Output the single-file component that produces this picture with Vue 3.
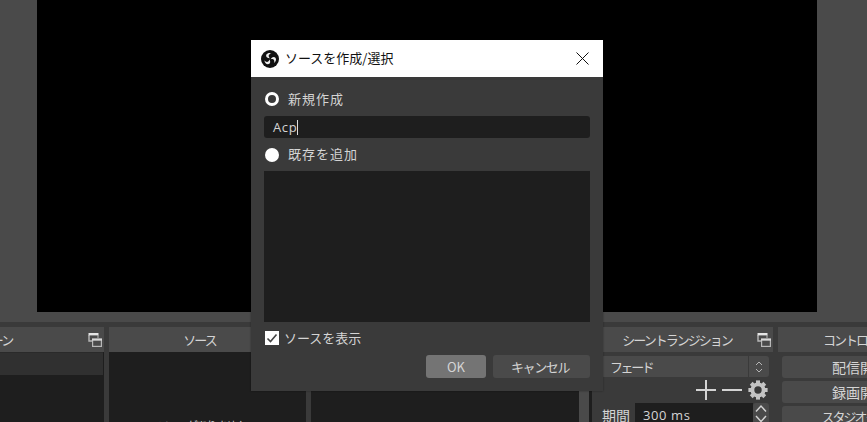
<template>
  <div class="main">
    <div class="preview-wrap">
      <div class="preview"></div>
    </div>

    <div class="docks">
      <section class="dock scenes">
        <header class="dock-title has-icon">
          <span class="title-text">シーン</span>
          <svg class="float-icon" width="14" height="14" viewBox="0 0 14 14">
            <path d="M1 2v6h3" fill="none" stroke="#b8b8b8" stroke-width="1.4" />
            <rect x="0.5" y="0" width="10" height="2.4" fill="#e6e6e6" />
            <path d="M10 2v3" stroke="#b8b8b8" stroke-width="1" />
            <rect x="4.6" y="6.6" width="8.8" height="6.8" fill="none" stroke="#b8b8b8" stroke-width="1.2" />
            <rect x="4" y="5.4" width="10" height="2.2" fill="#d8d8d8" />
          </svg>
        </header>
        <div class="dock-body">
          <div class="scene-row"></div>
        </div>
      </section>

      <section class="dock sources">
        <header class="dock-title has-icon"><span class="title-text">ソース</span></header>
        <div class="dock-body source-body">
          <span class="empty-hint">ソースがありません。</span>
        </div>
      </section>

      <section class="dock mixer">
        <div class="mixer-body">
          <div class="mixer-list"></div>
          <div class="mixer-scroll"></div>
        </div>
      </section>

      <section class="dock transitions">
        <header class="dock-title has-icon">
          <span class="title-text">シーントランジション</span>
          <svg class="float-icon" width="14" height="14" viewBox="0 0 14 14">
            <path d="M1 2v6h3" fill="none" stroke="#b8b8b8" stroke-width="1.4" />
            <rect x="0.5" y="0" width="10" height="2.4" fill="#e6e6e6" />
            <path d="M10 2v3" stroke="#b8b8b8" stroke-width="1" />
            <rect x="4.6" y="6.6" width="8.8" height="6.8" fill="none" stroke="#b8b8b8" stroke-width="1.2" />
            <rect x="4" y="5.4" width="10" height="2.2" fill="#d8d8d8" />
          </svg>
        </header>
        <div class="combo">
          <span class="combo-text">フェード</span>
          <span class="combo-arrows">
            <svg width="10" height="16" viewBox="0 0 10 16">
              <path d="M2 6l3-3 3 3M2 10l3 3 3-3" fill="none" stroke="#b5b5b5" stroke-width="1" />
            </svg>
          </span>
        </div>
        <div class="tools">
          <svg width="20" height="20" viewBox="0 0 20 20">
            <path d="M0 10h20M10 0v20" stroke="#d4d4d4" stroke-width="2" />
          </svg>
          <svg width="20" height="20" viewBox="0 0 20 20">
            <path d="M0 10h20" stroke="#d4d4d4" stroke-width="2" />
          </svg>
          <svg width="20" height="20" viewBox="0 0 20 20">
            <circle cx="10" cy="10" r="5.6" fill="none" stroke="#c4c4c4" stroke-width="3.8" />
            <rect
              v-for="angle in gearTeeth"
              :key="angle"
              x="8"
              y="0.4"
              width="4"
              height="4"
              fill="#c4c4c4"
              :transform="`rotate(${angle} 10 10)`"
            />
          </svg>
        </div>
        <div class="duration">
          <span class="duration-label">期間</span>
          <div class="spin-input">300 ms</div>
          <span class="spin-btn">
            <svg width="12" height="20" viewBox="0 0 12 20">
              <path d="M1 8.5l5-5.5 5 5.5M1 13l5 5.5 5-5.5" fill="none" stroke="#d4d4d4" stroke-width="1.4" />
            </svg>
          </span>
        </div>
      </section>

      <section class="dock controls">
        <header class="dock-title"><span class="title-text">コントロール</span></header>
        <div class="ctrl-btn">配信開始</div>
        <div class="ctrl-btn">録画開始</div>
        <div class="ctrl-btn narrow">スタジオモード</div>
      </section>
    </div>

    <div class="dialog">
      <div class="dialog-title">
        <svg class="obs-logo" width="18" height="18" viewBox="0 0 18 18">
          <circle cx="9" cy="9" r="9" fill="#111" />
          <path
            v-for="angle in logoBlades"
            :key="angle"
            d="M8.8 8.2C6.2 8.4 4.4 6.6 5.4 4.6C6.3 3 9 2.4 10.6 3.6C8 3.6 6.6 6.2 8.8 8.2z"
            fill="#eee"
            :transform="`rotate(${angle} 9 9)`"
          />
        </svg>
        <span class="dialog-caption">ソースを作成/選択</span>
        <svg class="close-x" width="13" height="13" viewBox="0 0 13 13">
          <path d="M0.5 0.5l12 12M12.5 0.5l-12 12" stroke="#111" stroke-width="1" />
        </svg>
      </div>

      <div class="dialog-body">
        <label class="radio-row">
          <span class="radio checked"></span>
          <span class="spaced">新規作成</span>
        </label>
        <div class="name-input"><span>Acp</span><i class="caret"></i></div>
        <label class="radio-row">
          <span class="radio"></span>
          <span class="spaced lift">既存を追加</span>
        </label>
        <div class="existing-list"></div>
        <label class="check-row">
          <span class="check">
            <svg width="14" height="14" viewBox="0 0 14 14">
              <path d="M2.5 7.5l3 3 6-7" fill="none" stroke="#444" stroke-width="1.6" />
            </svg>
          </span>
          <span class="check-label">ソースを表示</span>
        </label>
        <div class="dialog-buttons">
          <button class="btn primary">OK</button>
          <button class="btn cancel">キャンセル</button>
        </div>
      </div>
    </div>
  </div>
</template>

<script setup>
const gearTeeth = [0, 45, 90, 135, 180, 225, 270, 315];
const logoBlades = [0, 120, 240];
</script>

<style>
html, body {
  margin: 0;
  overflow: hidden;
  background: #3a3a3a;
}
</style>

<style scoped>
.main {
  position: relative;
  width: 867px;
  height: 422px;
  overflow: hidden;
  background: #3a3a3a;
  font-family: "Noto Sans CJK JP", "Liberation Sans", sans-serif;
  font-size: 13px;
  color: #d4d4d4;
}

.preview-wrap {
  height: 322px;
  padding: 0 50px 0 37px;
  box-sizing: border-box;
  background: #4a4a4a;
}
.preview {
  height: 312px;
  background: #000;
}

.docks {
  display: flex;
  gap: 5px;
  padding-top: 5px;
  margin-left: -102px;
  width: 1100px;
}
.dock {
  flex: none;
  display: flex;
  flex-direction: column;
  height: 95px;
}
.scenes { width: 206px; }
.sources { width: 197px; }
.mixer { width: 281px; }
.transitions { width: 176px; }
.controls { width: 160px; }

.dock-title {
  flex: none;
  height: 25px;
  display: flex;
  align-items: center;
  position: relative;
  background: #4a4a4a;
  box-sizing: border-box;
  padding-right: 4px;
}
.dock-title.has-icon { padding-right: 14px; }
.scenes .dock-title.has-icon { padding-left: 4px; }
.sources .dock-title.has-icon { padding-right: 16px; }
.transitions .dock-title.has-icon { padding-right: 16px; }
.title-text {
  flex: 1;
  text-align: center;
  letter-spacing: -2px;
}
.float-icon {
  position: absolute;
  right: 2px;
  top: 6px;
}
.dock-body {
  flex: 1;
  background: #1e1e1e;
}
.scene-row {
  height: 22px;
  margin-right: 1px;
  background: #303030;
  border-top: 1px solid #2a2a2a;
}
.source-body {
  padding: 66px 0 0 49px;
  overflow: hidden;
  box-sizing: border-box;
}
.empty-hint {
  display: block;
  font-size: 11px;
  line-height: 14px;
  letter-spacing: -1.2px;
  white-space: nowrap;
}

.mixer-body {
  flex: 1;
  display: flex;
  background: #1e1e1e;
}
.mixer-list { flex: 1; }
.mixer-scroll {
  width: 10px;
  margin-right: 3px;
  background: #4a4a4a;
}

.combo {
  display: flex;
  align-items: center;
  justify-content: space-between;
  height: 21px;
  margin: 4px 4px 0;
  padding-left: 9px;
  background: #4a4a4a;
  border-radius: 3px;
}
.combo-text { letter-spacing: -2.4px; }
.combo-arrows {
  display: flex;
  align-items: center;
  justify-content: center;
  width: 20px;
  height: 21px;
  border-left: 1px solid #3a3a3a;
}
.tools {
  display: flex;
  justify-content: flex-end;
  gap: 6px;
  height: 20px;
  margin: 3px 5px 0 0;
}
.duration {
  display: flex;
  align-items: flex-start;
  height: 30px;
  margin: 3px 0 0 5px;
}
.duration-label {
  width: 28px;
  font-size: 14px;
  line-height: 24px;
}
.spin-input {
  width: 118px;
  height: 30px;
  line-height: 24px;
  margin-left: 5px;
  padding-left: 8px;
  box-sizing: border-box;
  background: #1e1e1e;
  font-family: "Open Sans", sans-serif;
  font-size: 13px;
  letter-spacing: 0.6px;
}
.spin-btn {
  display: flex;
  width: 16px;
  height: 30px;
  justify-content: center;
  background: #4a4a4a;
  border-radius: 3px;
}

.ctrl-btn {
  height: 22px;
  margin: 4px 0 -1px 4px;
  background: #4a4a4a;
  border-radius: 3px;
  text-align: center;
  line-height: 22px;
  font-size: 14px;
  white-space: nowrap;
}
.ctrl-btn.narrow {
  font-size: 13px;
  letter-spacing: -2px;
}

.dialog {
  position: absolute;
  left: 251px;
  top: 40px;
  width: 352px;
  height: 351px;
  display: flex;
  flex-direction: column;
  background: #3a3a3a;
  box-shadow: 0 0 2px rgba(0, 0, 0, 0.35);
}
.dialog-title {
  flex: none;
  height: 37px;
  display: flex;
  align-items: center;
  padding: 0 14px 0 10px;
  background: #fff;
  color: #111;
}
.obs-logo { flex: none; }
.dialog-caption {
  flex: 1;
  margin-left: 6px;
  padding-bottom: 2px;
}
.dialog-body {
  flex: 1;
  display: flex;
  flex-direction: column;
  padding: 0 13px;
}
.radio-row {
  display: flex;
  align-items: center;
  gap: 9px;
  height: 24px;
  margin-top: 10px;
  padding-left: 1px;
}
.name-input + .radio-row { margin-top: 5px; }
.spaced {
  letter-spacing: 1px;
  padding-bottom: 2px;
}
.spaced.lift { padding-bottom: 4px; }
.radio {
  width: 14px;
  height: 14px;
  border-radius: 50%;
  background: #fff;
  box-sizing: border-box;
}
.radio.checked {
  background: #3a3a3a;
  border: 3px solid #fff;
}
.name-input {
  display: flex;
  align-items: center;
  height: 22px;
  margin-top: 5px;
  padding-left: 9px;
  background: #1e1e1e;
  border-radius: 3px;
  font-family: "Open Sans", sans-serif;
  font-size: 13px;
  letter-spacing: 0.6px;
}
.caret {
  width: 1px;
  height: 15px;
  background: #ddd;
}
.existing-list {
  flex: none;
  height: 151px;
  margin-top: 4px;
  background: #1e1e1e;
}
.check-row {
  display: flex;
  align-items: center;
  gap: 5px;
  height: 14px;
  margin-top: 9px;
  padding-left: 1px;
}
.check-label { padding-bottom: 1px; }
.check {
  display: flex;
  width: 14px;
  height: 14px;
  background: #fff;
}
.dialog-buttons {
  display: flex;
  justify-content: flex-end;
  gap: 7px;
  margin-top: 10px;
}
.btn {
  height: 23px;
  border: 0;
  padding: 0 3px 0 0;
  width: 97px;
  border-radius: 3px;
  background: #4a4a4a;
  color: #d4d4d4;
  font-family: inherit;
  font-size: 13px;
}
.btn.cancel { letter-spacing: -1.4px; }
.btn.primary {
  width: 60px;
  padding: 0;
  background: #747474;
}
</style>
